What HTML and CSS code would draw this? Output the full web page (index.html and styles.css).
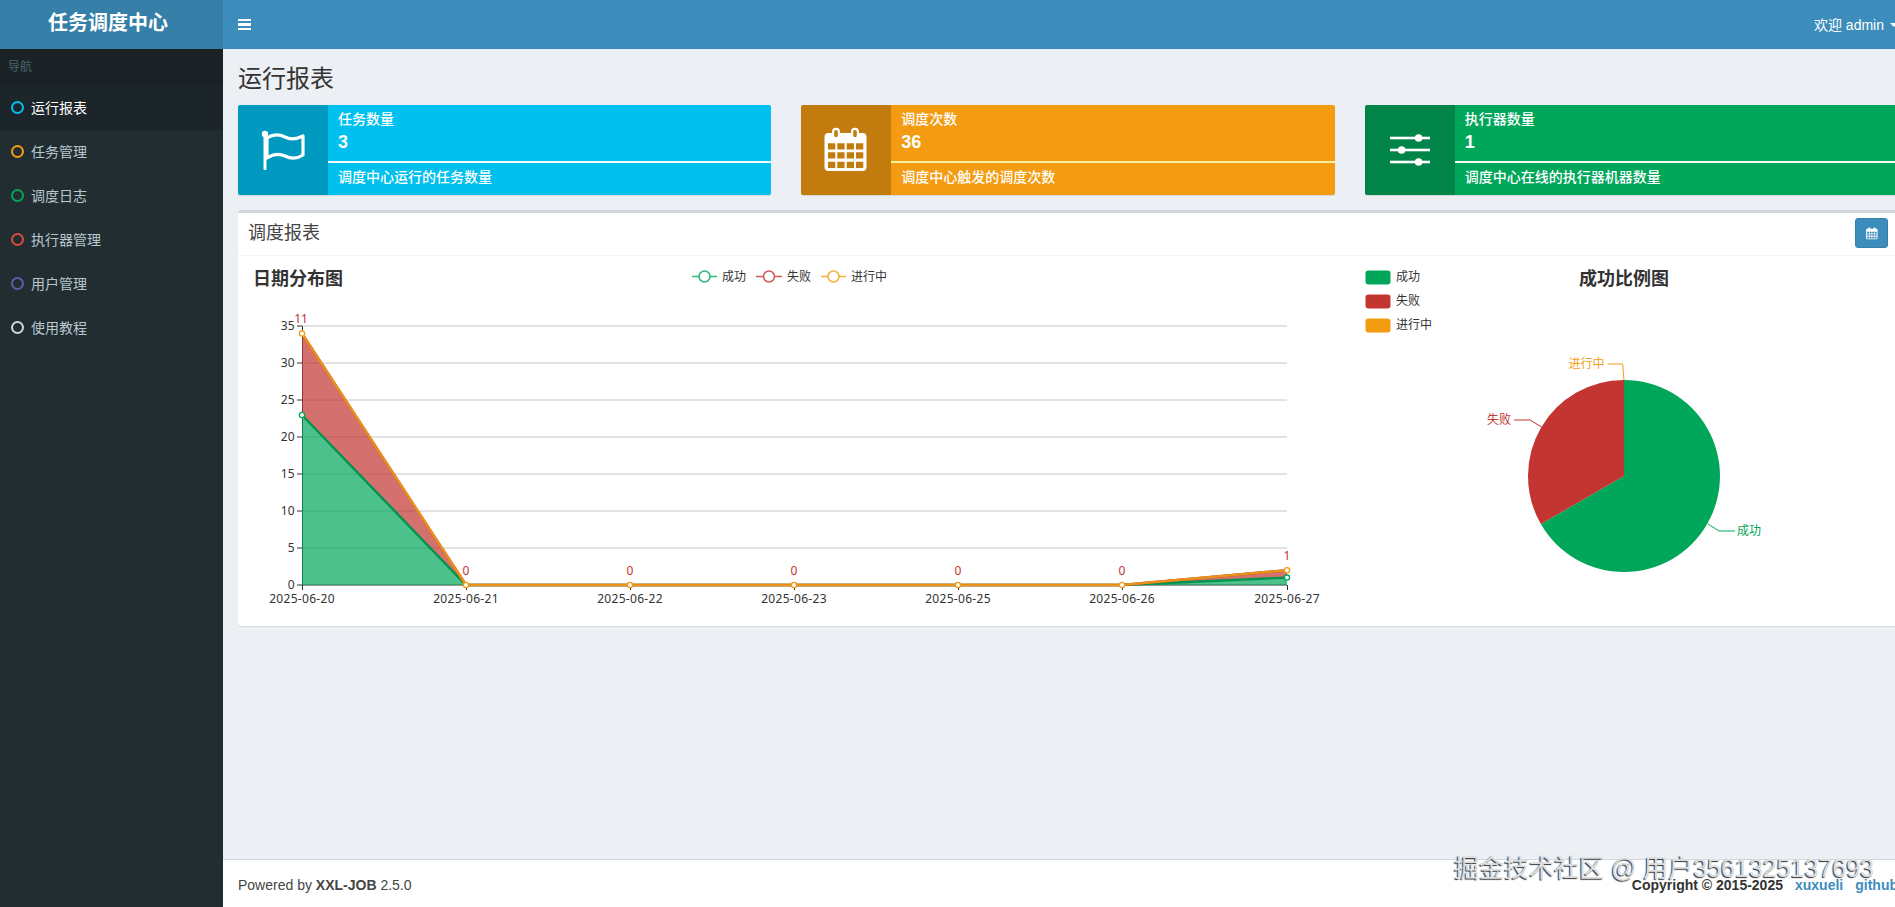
FILE: index.html
```html
<!DOCTYPE html>
<html lang="zh-CN">
<head>
<meta charset="utf-8">
<title>任务调度中心</title>
<link rel="stylesheet" href="styles.css">
</head>
<body>
<div class="app">
  <aside class="sidebar">
    <div class="logo">任务调度中心</div>
    <div class="nav-header">导航</div>
    <ul class="nav">
      <li class="nav-item active"><i class="ring ring-aqua"></i>运行报表</li>
      <li class="nav-item"><i class="ring ring-yellow"></i>任务管理</li>
      <li class="nav-item"><i class="ring ring-green"></i>调度日志</li>
      <li class="nav-item"><i class="ring ring-red"></i>执行器管理</li>
      <li class="nav-item"><i class="ring ring-purple"></i>用户管理</li>
      <li class="nav-item"><i class="ring ring-gray"></i>使用教程</li>
    </ul>
  </aside>
  <div class="main">
    <header class="navbar">
      <div class="burger"><span></span><span></span><span></span></div>
      <div class="user">欢迎 admin<b class="caret"></b></div>
    </header>
    <section class="content">
      <h1 class="page-title">运行报表</h1>
      <div class="boxes">
        <div class="box box-aqua">
          <div class="box-icon">
            <svg class="icon-lg" viewBox="0 0 44 42">
              <circle class="w-fill" cx="4" cy="5" r="3.2"/>
              <rect class="w-fill" x="2.5" y="5" width="3" height="36" rx="1.2"/>
              <path class="w-line" d="M6 9 C12 5 18 5 24 8 C30 11 36 10 42 7 L42 26 C36 30 30 30 24 27 C18 24 12 25 6 29 Z"/>
            </svg>
          </div>
          <div class="box-body">
            <span class="box-text">任务数量</span>
            <span class="box-number">3</span>
            <div class="box-bar"></div>
            <span class="box-text">调度中心运行的任务数量</span>
          </div>
        </div>
        <div class="box box-yellow">
          <div class="box-icon">
            <svg class="icon-lg" viewBox="0 0 44 46">
              <path class="w-fill" fill-rule="evenodd" d="M4.5 6H38.5A4 4 0 0 1 42.5 10V40A4 4 0 0 1 38.5 44H4.5A4 4 0 0 1 .5 40V10A4 4 0 0 1 4.5 6ZM4 16.3V22.6H11.3V16.3ZM13.3 16.3V22.6H20.6V16.3ZM22.7 16.3V22.6H30V16.3ZM32 16.3V22.6H39.3V16.3ZM4 25.3V31.6H11.3V25.3ZM13.3 25.3V31.6H20.6V25.3ZM22.7 25.3V31.6H30V25.3ZM32 25.3V31.6H39.3V25.3ZM4 34.7V41H11.3V34.7ZM13.3 34.7V41H20.6V34.7ZM22.7 34.7V41H30V34.7ZM32 34.7V41H39.3V34.7Z"/>
              <rect class="w-fill" x="8" y=".7" width="8" height="12" rx="4"/>
              <rect class="w-fill" x="27" y=".7" width="8" height="12" rx="4"/>
              <rect class="slot-yellow" x="10.2" y="3" width="3.6" height="7.2" rx="1.8"/>
              <rect class="slot-yellow" x="29.2" y="3" width="3.6" height="7.2" rx="1.8"/>
            </svg>
          </div>
          <div class="box-body">
            <span class="box-text">调度次数</span>
            <span class="box-number">36</span>
            <div class="box-bar box-bar-warm"></div>
            <span class="box-text">调度中心触发的调度次数</span>
          </div>
        </div>
        <div class="box box-green">
          <div class="box-icon">
            <svg class="icon-lg" viewBox="0 0 40 34">
              <rect class="w-fill" x="0" y="3.7" width="40" height="2.6"/>
              <rect class="w-fill" x="0" y="15.7" width="40" height="2.6"/>
              <rect class="w-fill" x="0" y="27.7" width="40" height="2.6"/>
              <circle class="w-fill" cx="28.6" cy="5" r="3.8"/>
              <circle class="w-fill" cx="11.6" cy="17" r="3.8"/>
              <circle class="w-fill" cx="28.6" cy="29" r="3.8"/>
            </svg>
          </div>
          <div class="box-body">
            <span class="box-text">执行器数量</span>
            <span class="box-number">1</span>
            <div class="box-bar"></div>
            <span class="box-text">调度中心在线的执行器机器数量</span>
          </div>
        </div>
      </div>
      <div class="card">
        <div class="card-head">
          <h3 class="card-title">调度报表</h3>
          <button class="btn" type="button">
            <svg class="icon-sm" viewBox="0 0 44 46">
              <path class="w-fill" fill-rule="evenodd" d="M4.5 6H38.5A4 4 0 0 1 42.5 10V40A4 4 0 0 1 38.5 44H4.5A4 4 0 0 1 .5 40V10A4 4 0 0 1 4.5 6ZM4 16.3V22.6H11.3V16.3ZM13.3 16.3V22.6H20.6V16.3ZM22.7 16.3V22.6H30V16.3ZM32 16.3V22.6H39.3V16.3ZM4 25.3V31.6H11.3V25.3ZM13.3 25.3V31.6H20.6V25.3ZM22.7 25.3V31.6H30V25.3ZM32 25.3V31.6H39.3V25.3ZM4 34.7V41H11.3V34.7ZM13.3 34.7V41H20.6V34.7ZM22.7 34.7V41H30V34.7ZM32 34.7V41H39.3V34.7Z"/>
              <rect class="w-fill" x="8" y=".7" width="8" height="12" rx="4"/>
              <rect class="w-fill" x="27" y=".7" width="8" height="12" rx="4"/>
            </svg>
          </button>
        </div>
        <div class="card-body">
          <svg class="chart chart-line" viewBox="238 256 1112 369">
            <text class="chart-title" x="253" y="285">日期分布图</text>

            <line class="lg-green" x1="692" y1="276.5" x2="717" y2="276.5"/>
            <circle class="lg-green lg-dot" cx="704.5" cy="276.5" r="5.5"/>
            <text class="lbl mid" x="722" y="276">成功</text>
            <line class="lg-red" x1="756" y1="276.5" x2="782" y2="276.5"/>
            <circle class="lg-red lg-dot" cx="769" cy="276.5" r="5.5"/>
            <text class="lbl mid" x="787" y="276">失败</text>
            <line class="lg-yellow" x1="821" y1="276.5" x2="846" y2="276.5"/>
            <circle class="lg-yellow lg-dot" cx="833.5" cy="276.5" r="5.5"/>
            <text class="lbl mid" x="851" y="276">进行中</text>

            <g class="grid">
              <line x1="302" y1="326" x2="1287" y2="326"/>
              <line x1="302" y1="363" x2="1287" y2="363"/>
              <line x1="302" y1="400" x2="1287" y2="400"/>
              <line x1="302" y1="437" x2="1287" y2="437"/>
              <line x1="302" y1="474" x2="1287" y2="474"/>
              <line x1="302" y1="511" x2="1287" y2="511"/>
              <line x1="302" y1="548" x2="1287" y2="548"/>
            </g>
            <g class="ticks">
              <line x1="302.5" y1="326" x2="302.5" y2="585"/>
              <line x1="297" y1="326" x2="302" y2="326"/>
              <line x1="297" y1="363" x2="302" y2="363"/>
              <line x1="297" y1="400" x2="302" y2="400"/>
              <line x1="297" y1="437" x2="302" y2="437"/>
              <line x1="297" y1="474" x2="302" y2="474"/>
              <line x1="297" y1="511" x2="302" y2="511"/>
              <line x1="297" y1="548" x2="302" y2="548"/>
              <line x1="297" y1="585" x2="1287" y2="585"/>
              <line x1="302.5" y1="585" x2="302.5" y2="590"/>
              <line x1="466.5" y1="585" x2="466.5" y2="590"/>
              <line x1="630.5" y1="585" x2="630.5" y2="590"/>
              <line x1="794.5" y1="585" x2="794.5" y2="590"/>
              <line x1="958.5" y1="585" x2="958.5" y2="590"/>
              <line x1="1122.5" y1="585" x2="1122.5" y2="590"/>
              <line x1="1287.5" y1="585" x2="1287.5" y2="590"/>
            </g>
            <g class="lbl end num">
              <text class="mid" x="295" y="325">35</text>
              <text class="mid" x="295" y="362">30</text>
              <text class="mid" x="295" y="399">25</text>
              <text class="mid" x="295" y="436">20</text>
              <text class="mid" x="295" y="473">15</text>
              <text class="mid" x="295" y="510">10</text>
              <text class="mid" x="295" y="547">5</text>
              <text class="mid" x="295" y="584">0</text>
            </g>
            <g class="lbl center num">
              <text class="mid" x="302" y="598">2025-06-20</text>
              <text class="mid" x="466" y="598">2025-06-21</text>
              <text class="mid" x="630" y="598">2025-06-22</text>
              <text class="mid" x="794" y="598">2025-06-23</text>
              <text class="mid" x="958" y="598">2025-06-25</text>
              <text class="mid" x="1122" y="598">2025-06-26</text>
              <text class="mid" x="1287" y="598">2025-06-27</text>
            </g>

            <polygon class="area-green" points="302,415 466,585 1122,585 1287,577.6 1287,585 302,585"/>
            <polygon class="area-red" points="302,333.5 466,585 1122,585 1287,570.2 1287,577.6 1122,585 466,585 302,415"/>
            <polyline class="line-green" points="302,415 466,585 1122,585 1287,577.6"/>
            <polyline class="line-red" points="302,333.5 466,585 1122,585 1287,570.2"/>
            <polyline class="line-yellow" points="302,333.5 466,585 1122,585 1287,570.2"/>

            <g class="mark mark-green">
              <circle cx="302" cy="415" r="2.6"/>
              <circle cx="1287" cy="577.6" r="2.6"/>
            </g>
            <g class="mark mark-yellow">
              <circle cx="302" cy="333.5" r="2.6"/>
              <circle cx="466" cy="585" r="2.6"/>
              <circle cx="630" cy="585" r="2.6"/>
              <circle cx="794" cy="585" r="2.6"/>
              <circle cx="958" cy="585" r="2.6"/>
              <circle cx="1122" cy="585" r="2.6"/>
              <circle cx="1287" cy="570.2" r="2.6"/>
            </g>
            <g class="lbl center val">
              <text class="mid" x="301" y="318.5">11</text>
              <text class="mid" x="466" y="570.5">0</text>
              <text class="mid" x="630" y="570.5">0</text>
              <text class="mid" x="794" y="570.5">0</text>
              <text class="mid" x="958" y="570.5">0</text>
              <text class="mid" x="1122" y="570.5">0</text>
              <text class="mid" x="1287" y="555.5">1</text>
            </g>
          </svg>
          <svg class="chart chart-pie" viewBox="1350 256 548 369">
            <rect class="sw-green" x="1365.5" y="270.5" width="25" height="14" rx="3"/>
            <text class="lbl mid" x="1396" y="276.5">成功</text>
            <rect class="sw-red" x="1365.5" y="294.5" width="25" height="14" rx="3"/>
            <text class="lbl mid" x="1396" y="300.5">失败</text>
            <rect class="sw-yellow" x="1365.5" y="318.5" width="25" height="14" rx="3"/>
            <text class="lbl mid" x="1396" y="324.5">进行中</text>
            <text class="chart-title center" x="1624" y="285">成功比例图</text>

            <path class="sw-green" d="M1624 476L1624 380A96 96 0 1 1 1540.86 524Z"/>
            <path class="sw-red" d="M1624 476L1540.86 524A96 96 0 0 1 1624 380Z"/>
            <polyline class="lead-green" points="1708,524 1719,531 1735,531"/>
            <polyline class="lead-red" points="1541.7,427 1530,420 1514,420"/>
            <polyline class="lead-yellow" points="1624,380 1622.7,364 1607.7,364"/>
            <text class="lbl mid txt-green" x="1737" y="530.5">成功</text>
            <text class="lbl mid end txt-red" x="1511" y="419.5">失败</text>
            <text class="lbl mid end txt-yellow" x="1604.5" y="363.5">进行中</text>
          </svg>
        </div>
      </div>
    </section>
    <footer class="footer">
      <div>Powered by <b>XXL-JOB</b> 2.5.0</div>
      <div class="footer-right"><b>Copyright © 2015-2025</b><a class="flink">xuxueli</a><a class="flink">github</a></div>
    </footer>
  </div>
</div>
<div class="watermark">掘金技术社区 @ 用户3561325137693</div>
</body>
</html>
```
FILE: styles.css
```css
* { box-sizing: border-box; }
html, body {
  margin: 0;
  width: 1895px;
  height: 907px;
  overflow: hidden;
}
body {
  position: relative;
  font-family: "Liberation Sans", "Noto Sans CJK SC", sans-serif;
  font-size: 14px;
  line-height: 20px;
  color: #333;
  background: #ecf0f5;
}
.app {
  display: flex;
  height: 907px;
  width: 1913px;
}
.sidebar {
  width: 223px;
  flex: none;
  background: #222d32;
}
.logo {
  height: 49px;
  line-height: 46px;
  background: #367fa9;
  color: #fff;
  font-size: 20px;
  font-weight: 700;
  padding-right: 7px;
  text-align: center;
}
.nav-header {
  height: 37px;
  padding: 8px 8px 6px;
  font-size: 12px;
  color: #4b646f;
  background: #1a2226;
}
.nav {
  list-style: none;
  margin: 0;
  padding: 0;
}
.nav-item {
  height: 44px;
  display: flex;
  align-items: center;
  gap: 7px;
  padding-left: 11px;
  padding-bottom: 1px;
  color: #b8c7ce;
}
.nav-item.active {
  background: #1c2529;
  color: #fff;
}
.ring {
  width: 13px;
  height: 13px;
  border-radius: 50%;
  border: 2.6px solid #d2d6de;
}
.ring-aqua { border-color: #00c0ef; }
.ring-yellow { border-color: #f39c12; }
.ring-green { border-color: #00a65a; }
.ring-red { border-color: #dd4b39; }
.ring-purple { border-color: #605ca8; }
.ring-gray { border-color: #d2d6de; }

.main {
  flex: 1;
  display: flex;
  flex-direction: column;
  min-width: 0;
}
.navbar {
  height: 49px;
  flex: none;
  background: #3c8dbc;
  color: #fff;
  display: flex;
  justify-content: space-between;
  align-items: center;
  padding: 0 15px;
}
.burger {
  width: 13px;
  display: flex;
  flex-direction: column;
  gap: 2px;
}
.burger span {
  height: 2.3px;
  background: #fff;
}
.user {
  display: flex;
  align-items: center;
  gap: 6px;
}
.caret {
  width: 0;
  height: 0;
  border-left: 4px solid transparent;
  border-right: 4px solid transparent;
  border-top: 4px solid #fff;
}

.content {
  flex: 1;
  padding: 15px 15px 0;
}
.page-title {
  margin: 0 0 15px;
  height: 26px;
  font-size: 24px;
  line-height: 29px;
  font-weight: 400;
}
.boxes {
  display: grid;
  grid-template-columns: repeat(3, 533.33px);
  gap: 30px;
  margin-bottom: 15px;
}
.box {
  height: 90px;
  display: flex;
  border-radius: 2px;
  color: #fff;
  overflow: hidden;
  box-shadow: 0 1px 1px rgba(0, 0, 0, .1);
}
.box-aqua { background: #00c0ef; }
.box-yellow { background: #f39c12; }
.box-green { background: #00a65a; }
.box-icon {
  width: 90px;
  flex: none;
  display: flex;
  align-items: center;
  justify-content: center;
  background: rgba(0, 0, 0, .2);
}
.box-aqua .icon-lg { width: 44px; height: 42px; }
.box-yellow .icon-lg { width: 44px; height: 46px; }
.box-green .icon-lg { width: 40px; height: 34px; }
.w-fill { fill: #fff; }
.w-line { fill: none; stroke: #fff; stroke-width: 3.2; stroke-linejoin: round; }
.slot-yellow { fill: #c27d0e; }
.box-body {
  flex: 1;
  padding: 5px 10px;
}
.box-text {
  display: block;
  height: 20px;
  line-height: 18px;
  font-weight: 500;
}
.box-number {
  display: block;
  font-size: 18px;
  font-weight: 700;
  line-height: 25.7px;
}
.box-bar {
  height: 2px;
  margin: 5px -10px;
  background: rgba(255, 255, 255, .95);
}
.box-bar-warm { background: #fdf1a0; }

.card {
  height: 416px;
  background: #fff;
  border-top: 3px solid #d2d6de;
  border-radius: 3px;
  box-shadow: 0 1px 1px rgba(0, 0, 0, .1);
}
.card-head {
  height: 43px;
  padding: 5px 10px 0;
  display: flex;
  justify-content: space-between;
  border-bottom: 1px solid #f4f4f4;
}
.card-title {
  margin: 0;
  font-size: 18px;
  line-height: 31px;
  font-weight: 400;
  color: #444;
}
.btn {
  width: 33px;
  height: 30px;
  padding: 0;
  background: #3c8dbc;
  border: 1px solid #367fa9;
  border-radius: 3px;
  display: flex;
  align-items: center;
  justify-content: center;
}
.icon-sm { width: 12px; height: 13px; }
.card-body {
  display: flex;
  height: 369px;
}
.chart { display: block; height: 369px; flex: none; }
.chart-line { width: 1112px; }
.chart-pie { width: 548px; }
.chart-title {
  font-family: "Noto Sans CJK SC", sans-serif;
  font-size: 18px;
  font-weight: 700;
  fill: #333;
}
.lbl {
  font-family: "Noto Sans", "Noto Sans CJK SC", sans-serif;
  font-size: 12px;
  fill: #333;
}
.num { letter-spacing: .3px; }
.mid { dominant-baseline: central; }
.end { text-anchor: end; }
.center { text-anchor: middle; }
.val { fill: #c23531; }
.grid line { stroke: #c6c6c6; stroke-width: 1; }
.ticks line { stroke: #333; stroke-width: 1; }
.lg-green { stroke: #00a65a; stroke-opacity: .8; stroke-width: 1.5; }
.lg-red { stroke: #c23531; stroke-opacity: .8; stroke-width: 1.5; }
.lg-yellow { stroke: #f39c12; stroke-opacity: .8; stroke-width: 1.5; }
.lg-dot { fill: #fff; }
.area-green { fill: #00a65a; fill-opacity: .7; }
.area-red { fill: #c23531; fill-opacity: .7; }
.line-green, .line-red, .line-yellow { fill: none; stroke-width: 2.4; }
.line-green { stroke: #00944f; }
.line-red { stroke: #c23531; }
.line-yellow { stroke: #e8921a; }
.mark circle { fill: #fff; stroke-width: 1.3; }
.mark-green circle { stroke: #00a65a; }
.mark-yellow circle { stroke: #f39c12; }
.sw-green { fill: #00a65a; }
.sw-red { fill: #c23531; }
.sw-yellow { fill: #f39c12; }
.lead-green, .lead-red, .lead-yellow { fill: none; stroke-width: 1; }
.lead-green { stroke: #00a65a; }
.lead-red { stroke: #c23531; }
.lead-yellow { stroke: #f39c12; }
.txt-green { fill: #00a65a; }
.txt-red { fill: #c23531; }
.txt-yellow { fill: #f39c12; }

.footer {
  height: 48px;
  flex: none;
  padding: 15px;
  display: flex;
  justify-content: space-between;
  background: #fff;
  border-top: 1px solid #d2d6de;
  color: #444;
}
.footer-right {
  display: flex;
  gap: 12px;
  color: #333;
}
.flink {
  font-weight: 700;
  color: #3c8dbc;
}
.watermark {
  position: absolute;
  left: 1454px;
  top: 852px;
  font-size: 25px;
  line-height: 32px;
  white-space: nowrap;
  color: #dedede;
  text-shadow: -1px 1px 1px #333;
}
```
